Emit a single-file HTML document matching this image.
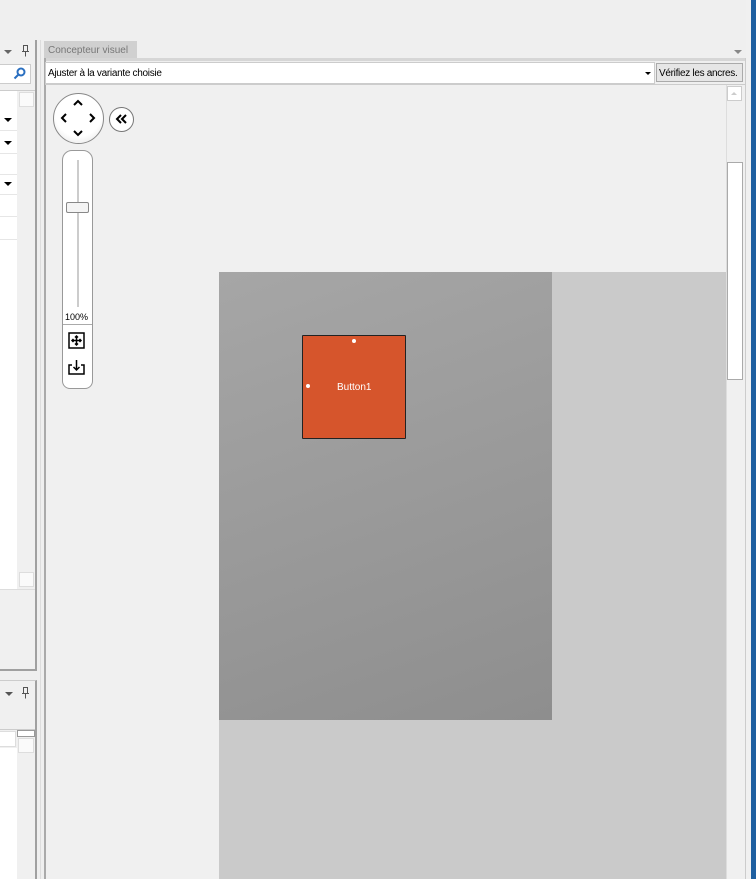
<!DOCTYPE html>
<html><head><style>
body{margin:0;width:756px;height:879px;background:#efefef;position:relative;overflow:hidden;font-family:"Liberation Sans",sans-serif;}
div{position:absolute;box-sizing:border-box;}
.t{font-size:10px;color:#000;letter-spacing:-0.3px;}
.arr{width:0;height:0;border-left:4px solid transparent;border-right:4px solid transparent;border-top:4px solid #000;}
</style></head><body>
<!-- left panel -->
<div style="left:0;top:40px;width:37px;height:631px;border-right:2px solid #a0a0a0;border-bottom:2px solid #a0a0a0;background:#f0f0f0"></div>
<div class="arr" style="left:4px;top:50px;border-top-color:#666"></div>
<svg style="position:absolute;left:21px;top:44px" width="10" height="13" fill="none" stroke="#555" stroke-width="1"><path d="M2.5 1.5h4v6h-4zM1 7.5h7M4.5 7.5v5"/></svg>
<div style="left:0;top:64px;width:31px;height:20px;background:#fff;border:1px solid #ccc;border-left:none"></div>
<svg style="position:absolute;left:13px;top:66px" width="14" height="14" fill="none" stroke="#2a6fc0" stroke-width="2"><circle cx="8" cy="6" r="3.5"/><path d="M5.5 8.5l-4 4"/></svg>
<div style="left:0;top:90px;width:35px;height:1px;background:#ccc"></div>
<div style="left:0;top:91px;width:17px;height:498px;background:#fff"></div>
<div style="left:18px;top:91px;width:17px;height:498px;background:#f0f0f0"></div>
<div style="left:19px;top:92px;width:15px;height:15px;border:1px solid #ddd;background:#fafafa"></div>
<div style="left:19px;top:572px;width:15px;height:15px;border:1px solid #ddd;background:#fafafa"></div>
<div style="left:0;top:130px;width:17px;height:1px;background:#e6e6e6"></div>
<div style="left:0;top:153px;width:17px;height:1px;background:#e6e6e6"></div>
<div style="left:0;top:174px;width:17px;height:1px;background:#e6e6e6"></div>
<div style="left:0;top:194px;width:17px;height:1px;background:#e6e6e6"></div>
<div style="left:0;top:216px;width:17px;height:1px;background:#e6e6e6"></div>
<div style="left:0;top:239px;width:17px;height:1px;background:#e6e6e6"></div>
<div class="arr" style="left:4px;top:118px"></div>
<div class="arr" style="left:4px;top:141px"></div>
<div class="arr" style="left:4px;top:182px"></div>
<div style="left:0;top:589px;width:35px;height:1px;background:#ddd"></div>
<!-- left lower panel -->
<div style="left:0;top:680px;width:37px;height:199px;border-top:1px solid #ccc;border-right:2px solid #a0a0a0;background:#f0f0f0"></div>
<div class="arr" style="left:5px;top:692px;border-top-color:#555"></div>
<svg style="position:absolute;left:21px;top:686px" width="10" height="13" fill="none" stroke="#555" stroke-width="1"><path d="M2.5 1.5h4v6h-4zM1 7.5h7M4.5 7.5v5"/></svg>
<div style="left:0;top:729px;width:35px;height:1px;background:#ccc"></div>
<div style="left:0;top:731px;width:16px;height:16px;background:#fff;border:1px solid #ddd;border-left:none"></div>
<div style="left:17px;top:730px;width:18px;height:7px;border:1px solid #999;background:#fff"></div>
<div style="left:0;top:748px;width:17px;height:131px;background:#fff"></div>
<div style="left:18px;top:738px;width:16px;height:15px;border:1px solid #ddd;background:#fafafa"></div>
<div style="left:40px;top:40px;width:1px;height:839px;background:#ddd"></div>
<!-- main panel -->
<div style="left:44px;top:41px;width:93px;height:18px;background:#d0d0d0"></div>
<div style="left:48px;top:45px;font-size:10px;color:#777">Concepteur visuel</div>
<div class="arr" style="left:734px;top:50px;border-top-color:#888"></div>
<div style="left:44px;top:58px;width:702px;height:3px;background:#d6d6d6"></div>
<div style="left:44px;top:58px;width:702px;height:821px;border-left:2px solid #aaa;border-right:1px solid #ccc"></div>
<div style="left:45px;top:62px;width:610px;height:22px;background:#fff;border:1px solid #ccc"></div>
<div class="t" style="left:48px;top:68px">Ajuster à la variante choisie</div>
<div class="arr" style="left:645px;top:72px;border-left-width:3px;border-right-width:3px;border-top-width:3px"></div>
<div style="left:656px;top:63px;width:87px;height:19px;background:#e6e6e6;border:1px solid #aaa"></div>
<div class="t" style="left:659px;top:68px">Vérifiez les ancres.</div>
<div style="left:45px;top:84px;width:700px;height:1px;background:#ccc"></div>
<div style="left:46px;top:85px;width:680px;height:794px;background:#f0f0f0"></div>
<!-- scrollbar -->
<div style="left:726px;top:85px;width:19px;height:794px;background:#f0f0f0;border-left:1px solid #ddd"></div>
<div style="left:727px;top:86px;width:15px;height:15px;background:#fff;border:1px solid #ccc"></div>
<div class="arr" style="left:731px;top:92px;border-top:none;border-bottom:3px solid #ccc;border-left-width:3px;border-right-width:3px"></div>
<div style="left:727px;top:162px;width:16px;height:218px;background:#fff;border:1px solid #aaa"></div>
<div style="left:751px;top:0;width:5px;height:879px;background:#1e5fa0"></div>
<div style="left:746px;top:0;width:5px;height:879px;background:#f0f0f0"></div>
<!-- canvas -->
<div style="left:219px;top:272px;width:507px;height:607px;background:#cacaca"></div>
<div style="left:219px;top:272px;width:333px;height:448px;background:linear-gradient(160deg,#a6a6a6,#8e8e8e)"></div>
<div style="left:302px;top:335px;width:104px;height:104px;background:#d6552c;border:1px solid #222;border-radius:1px"></div>
<div style="left:337px;top:382px;font-size:10px;color:#fff">Button1</div>
<div style="left:352px;top:339px;width:4px;height:4px;background:#fff;border-radius:50%"></div>
<div style="left:306px;top:384px;width:4px;height:4px;background:#fff;border-radius:50%"></div>
<!-- nav controls -->
<div style="left:53px;top:93px;width:51px;height:51px;border-radius:50%;background:radial-gradient(circle at 50% 40%,#fff 60%,#ddd);border:1px solid #888"></div>
<svg style="position:absolute;left:53px;top:93px" width="51" height="51" fill="none" stroke="#000" stroke-width="2"><path d="M21 12l4-4 4 4M21 38l4 4 4-4M13 21l-4 4 4 4M37 21l4 4-4 4"/></svg>
<div style="left:109px;top:107px;width:25px;height:25px;border-radius:50%;background:#fff;border:1px solid #777"></div>
<svg style="position:absolute;left:109px;top:107px" width="25" height="25" fill="none" stroke="#000" stroke-width="2"><path d="M12 8l-4 4 4 4M17 8l-4 4 4 4"/></svg>
<div style="left:62px;top:150px;width:31px;height:239px;background:#fff;border:1px solid #999;border-radius:10px 10px 8px 8px"></div>
<div style="left:77px;top:160px;width:2px;height:147px;background:#ccc"></div>
<div style="left:66px;top:202px;width:23px;height:11px;background:#f4f4f4;border:1px solid #888;border-radius:2px"></div>
<div style="left:65px;top:312px;font-size:9px;color:#000">100%</div>
<div style="left:63px;top:324px;width:29px;height:1px;background:#aaa"></div>
<svg style="position:absolute;left:67px;top:331px" width="20" height="48" fill="none" stroke="#000" stroke-width="1.5"><rect x="2" y="2" width="15" height="15"/><path d="M9.5 5v9M5 9.5h9M8 6.5l1.5-1.5 1.5 1.5M8 12.5l1.5 1.5 1.5-1.5M6.5 8l-1.5 1.5 1.5 1.5M12.5 8l1.5 1.5-1.5 1.5"/><path d="M5 34H2v9h15v-9h-3M9.5 29v10M6.5 36l3 3 3-3"/></svg>
</body></html>
